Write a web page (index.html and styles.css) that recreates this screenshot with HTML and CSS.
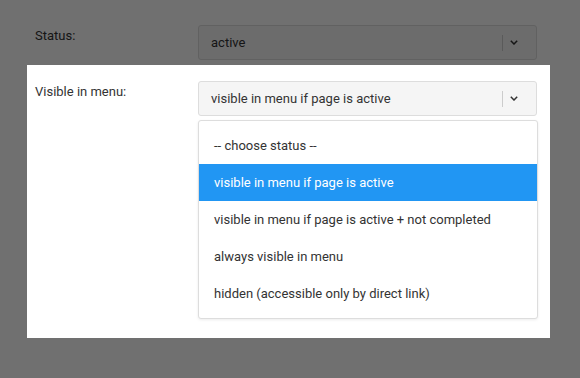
FILE: index.html
```html
<!DOCTYPE html>
<html lang="en">
<head>
    <meta charset="UTF-8">
    <meta name="viewport" content="width=device-width, initial-scale=1.0">
    <title>Page settings</title>
    <link rel="stylesheet" href="styles.css">
</head>
<body>
    <div class="settings-form">
        <div class="form-row">
            <label class="row-label">Status:</label>
            <div class="select-box">
                <span class="select-value">active</span>
                <span class="select-arrow">
                    <svg width="8" height="5" viewBox="0 0 8 5"><polyline points="0.8,0.8 4,4 7.2,0.8" fill="none" stroke="#333" stroke-width="1.5"/></svg>
                </span>
            </div>
        </div>

        <div class="page-overlay"></div>

        <div class="form-row is-highlighted">
            <label class="row-label">Visible in menu:</label>
            <div class="select-box is-open">
                <span class="select-value">visible in menu if page is active</span>
                <span class="select-arrow">
                    <svg width="8" height="5" viewBox="0 0 8 5"><polyline points="0.8,0.8 4,4 7.2,0.8" fill="none" stroke="#333" stroke-width="1.5"/></svg>
                </span>
                <ul class="select-options">
                    <li>-- choose status --</li>
                    <li class="selected">visible in menu if page is active</li>
                    <li>visible in menu if page is active + not completed</li>
                    <li>always visible in menu</li>
                    <li>hidden (accessible only by direct link)</li>
                </ul>
            </div>
        </div>
    </div>
</body>
</html>
```

FILE: styles.css
```css
body {
    margin: 0;
    background-color: #fff;
    font-family: Roboto, "Liberation Sans", Arial, sans-serif;
    font-size: 13px;
    color: #333;
}

.settings-form {
    padding: 25px 0 0 35px;
}

.form-row {
    display: grid;
    grid-template-columns: 163px 339px;
    align-items: start;
}

.row-label {
    line-height: 20px;
    padding-top: 1px;
}

.select-box {
    position: relative;
    display: flex;
    align-items: center;
    height: 35px;
    box-sizing: border-box;
    border: 1px solid #ddd;
    border-radius: 3px;
    background-color: #f5f5f5;
}

.select-value {
    flex: 1;
    padding-left: 12px;
}

.select-arrow {
    display: flex;
    align-items: center;
    width: 34px;
    height: 16px;
    padding-left: 7px;
    box-sizing: border-box;
    border-left: 1px solid #ccc;
}

/* the grey layer that dims everything except the highlighted row */
.page-overlay {
    position: fixed;
    top: 0;
    left: 0;
    right: 0;
    bottom: 0;
    background-color: rgba(0, 0, 0, 0.56);
    z-index: 1;
}

.form-row.is-highlighted {
    position: relative;
    z-index: 2;
    background-color: #fff;
    margin: 5px 0 0 -8px;
    padding: 16px 13px 0 8px;
    width: 502px;
    height: 257px;
}

.select-options {
    position: absolute;
    top: 38px;
    left: -1px;
    width: 340px;
    box-sizing: border-box;
    margin: 0;
    padding: 6px 0;
    list-style: none;
    background-color: #fff;
    border: 1px solid #ddd;
    border-radius: 3px;
    box-shadow: 0 1px 3px rgba(0, 0, 0, 0.08);
}

.select-options li {
    height: 37px;
    line-height: 37px;
    padding-left: 15px;
}

.select-options li.selected {
    background-color: #2196f3;
    color: #fff;
}
```
